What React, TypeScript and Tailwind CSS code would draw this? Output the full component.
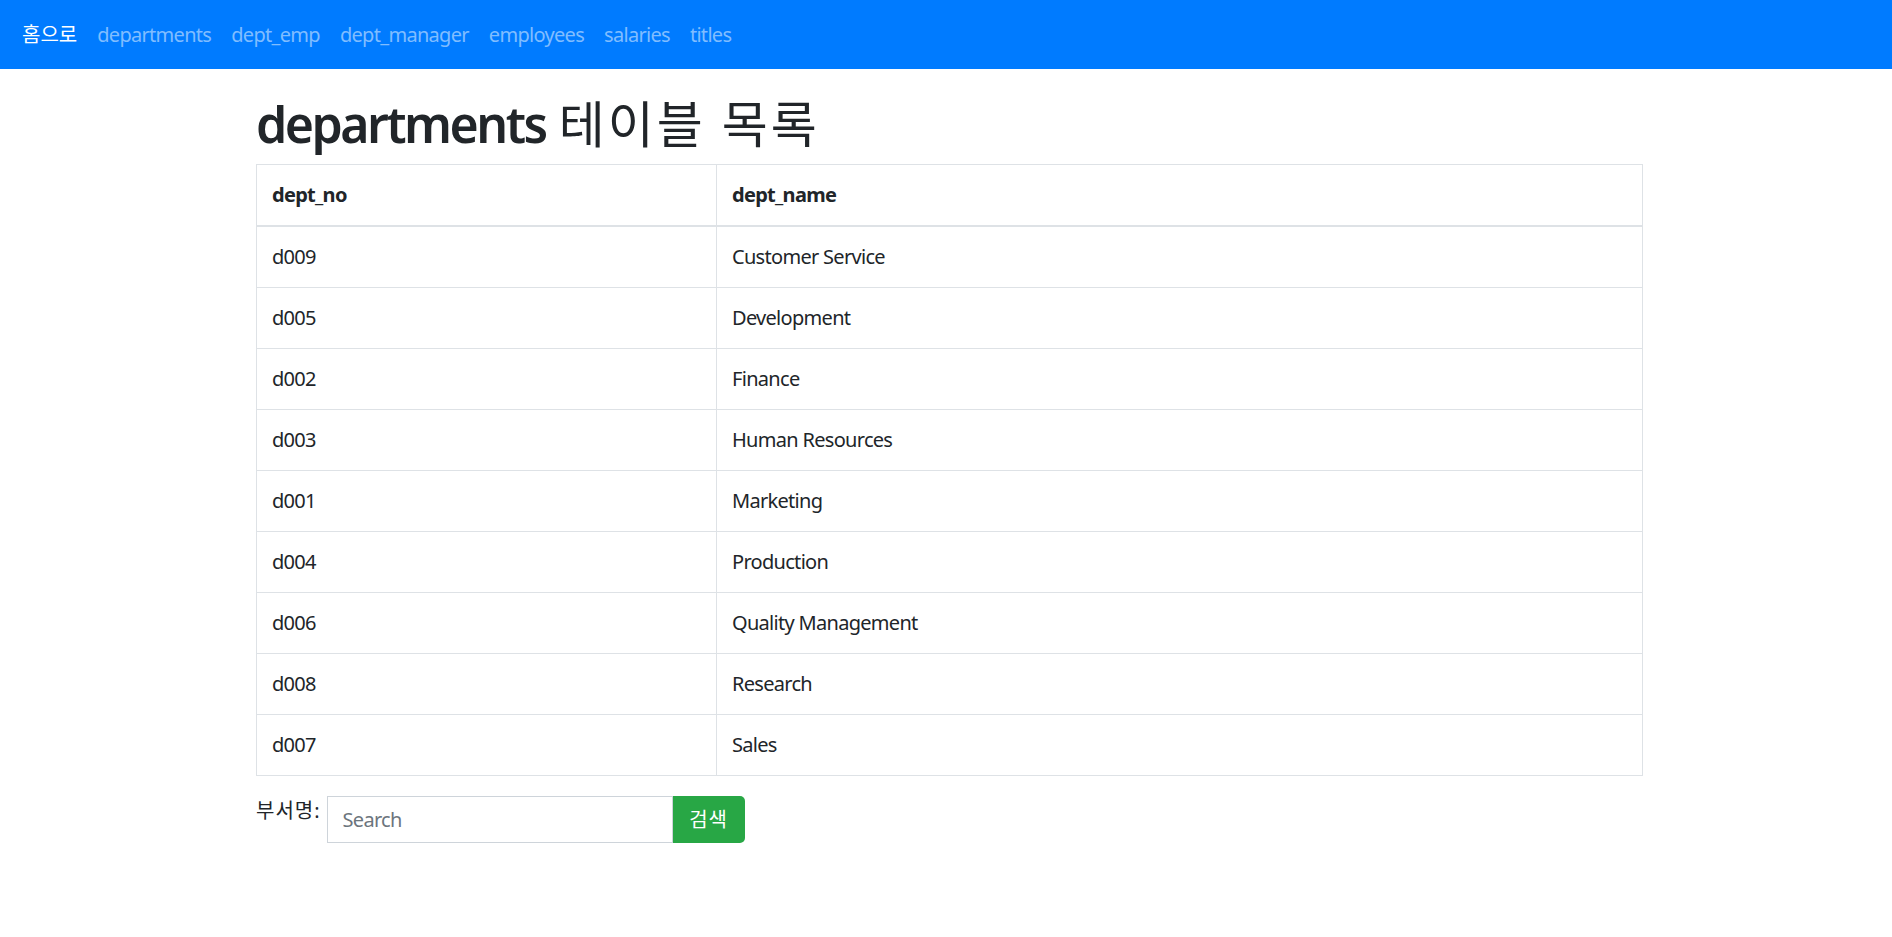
import React, { useState } from 'react';

const departments = [
  { no: 'd009', name: 'Customer Service' },
  { no: 'd005', name: 'Development' },
  { no: 'd002', name: 'Finance' },
  { no: 'd003', name: 'Human Resources' },
  { no: 'd001', name: 'Marketing' },
  { no: 'd004', name: 'Production' },
  { no: 'd006', name: 'Quality Management' },
  { no: 'd008', name: 'Research' },
  { no: 'd007', name: 'Sales' },
];

const navLinks = ['departments', 'dept_emp', 'dept_manager', 'employees', 'salaries', 'titles'];

const font = { fontFamily: '"Noto Sans", "Noto Sans CJK KR", sans-serif' };

export default function App() {
  const [keyword, setKeyword] = useState('');

  return (
    <div className="min-h-screen bg-white text-[#212529]" style={font}>
      {/* 상단 네비게이션 */}
      <nav className="h-[69px] bg-[#007bff] flex items-center pl-[12px]">
        <a className="px-[10px] text-[20px] leading-[30px] text-white">홈으로</a>
        {navLinks.map(link => (
          <a key={link} className="px-[10px] text-[20px] leading-[30px] tracking-[-0.7px] text-[#80bdff]">
            {link}
          </a>
        ))}
      </nav>

      <div className="ml-[256px] w-[1387px] pt-[25px]">
        <h1 className="text-[50px] leading-[60px] mb-[10px]">
          <span className="font-semibold tracking-[-2.5px]">departments</span>{' '}
          <span className="font-normal tracking-[3px]">테이블 목록</span>
        </h1>

        {/* 테이블 */}
        <table className="w-full border-collapse border border-[#dee2e6] text-[20px] leading-[30px] tracking-[-0.7px]">
          <thead>
            <tr>
              <th className="w-[460px] text-left font-bold px-[15px] py-[15px] border border-[#dee2e6] border-b-2">
                dept_no
              </th>
              <th className="text-left font-bold px-[15px] py-[15px] border border-[#dee2e6] border-b-2">
                dept_name
              </th>
            </tr>
          </thead>
          <tbody>
            {departments.map(dept => (
              <tr key={dept.no}>
                <td className="px-[15px] py-[15px] border border-[#dee2e6]">{dept.no}</td>
                <td className="px-[15px] py-[15px] border border-[#dee2e6]">{dept.name}</td>
              </tr>
            ))}
          </tbody>
        </table>

        {/* 검색 */}
        <form className="mt-[20px] flex items-start" onSubmit={e => e.preventDefault()}>
          <label className="text-[20px] leading-[30px] tracking-[1px] mr-[6px] text-[#212529]">부서명:</label>
          <input
            type="text"
            value={keyword}
            onChange={e => setKeyword(e.target.value)}
            placeholder="Search"
            className="w-[346px] h-[47px] border border-[#ced4da] px-[15px] text-[20px] tracking-[-0.7px] text-[#495057] placeholder:text-[#6c757d] outline-none"
          />
          <button
            type="submit"
            className="w-[72px] h-[47px] bg-[#28a745] text-white text-[20px] tracking-[1px] rounded-r-[5px]"
          >
            검색
          </button>
        </form>
      </div>
    </div>
  );
}
